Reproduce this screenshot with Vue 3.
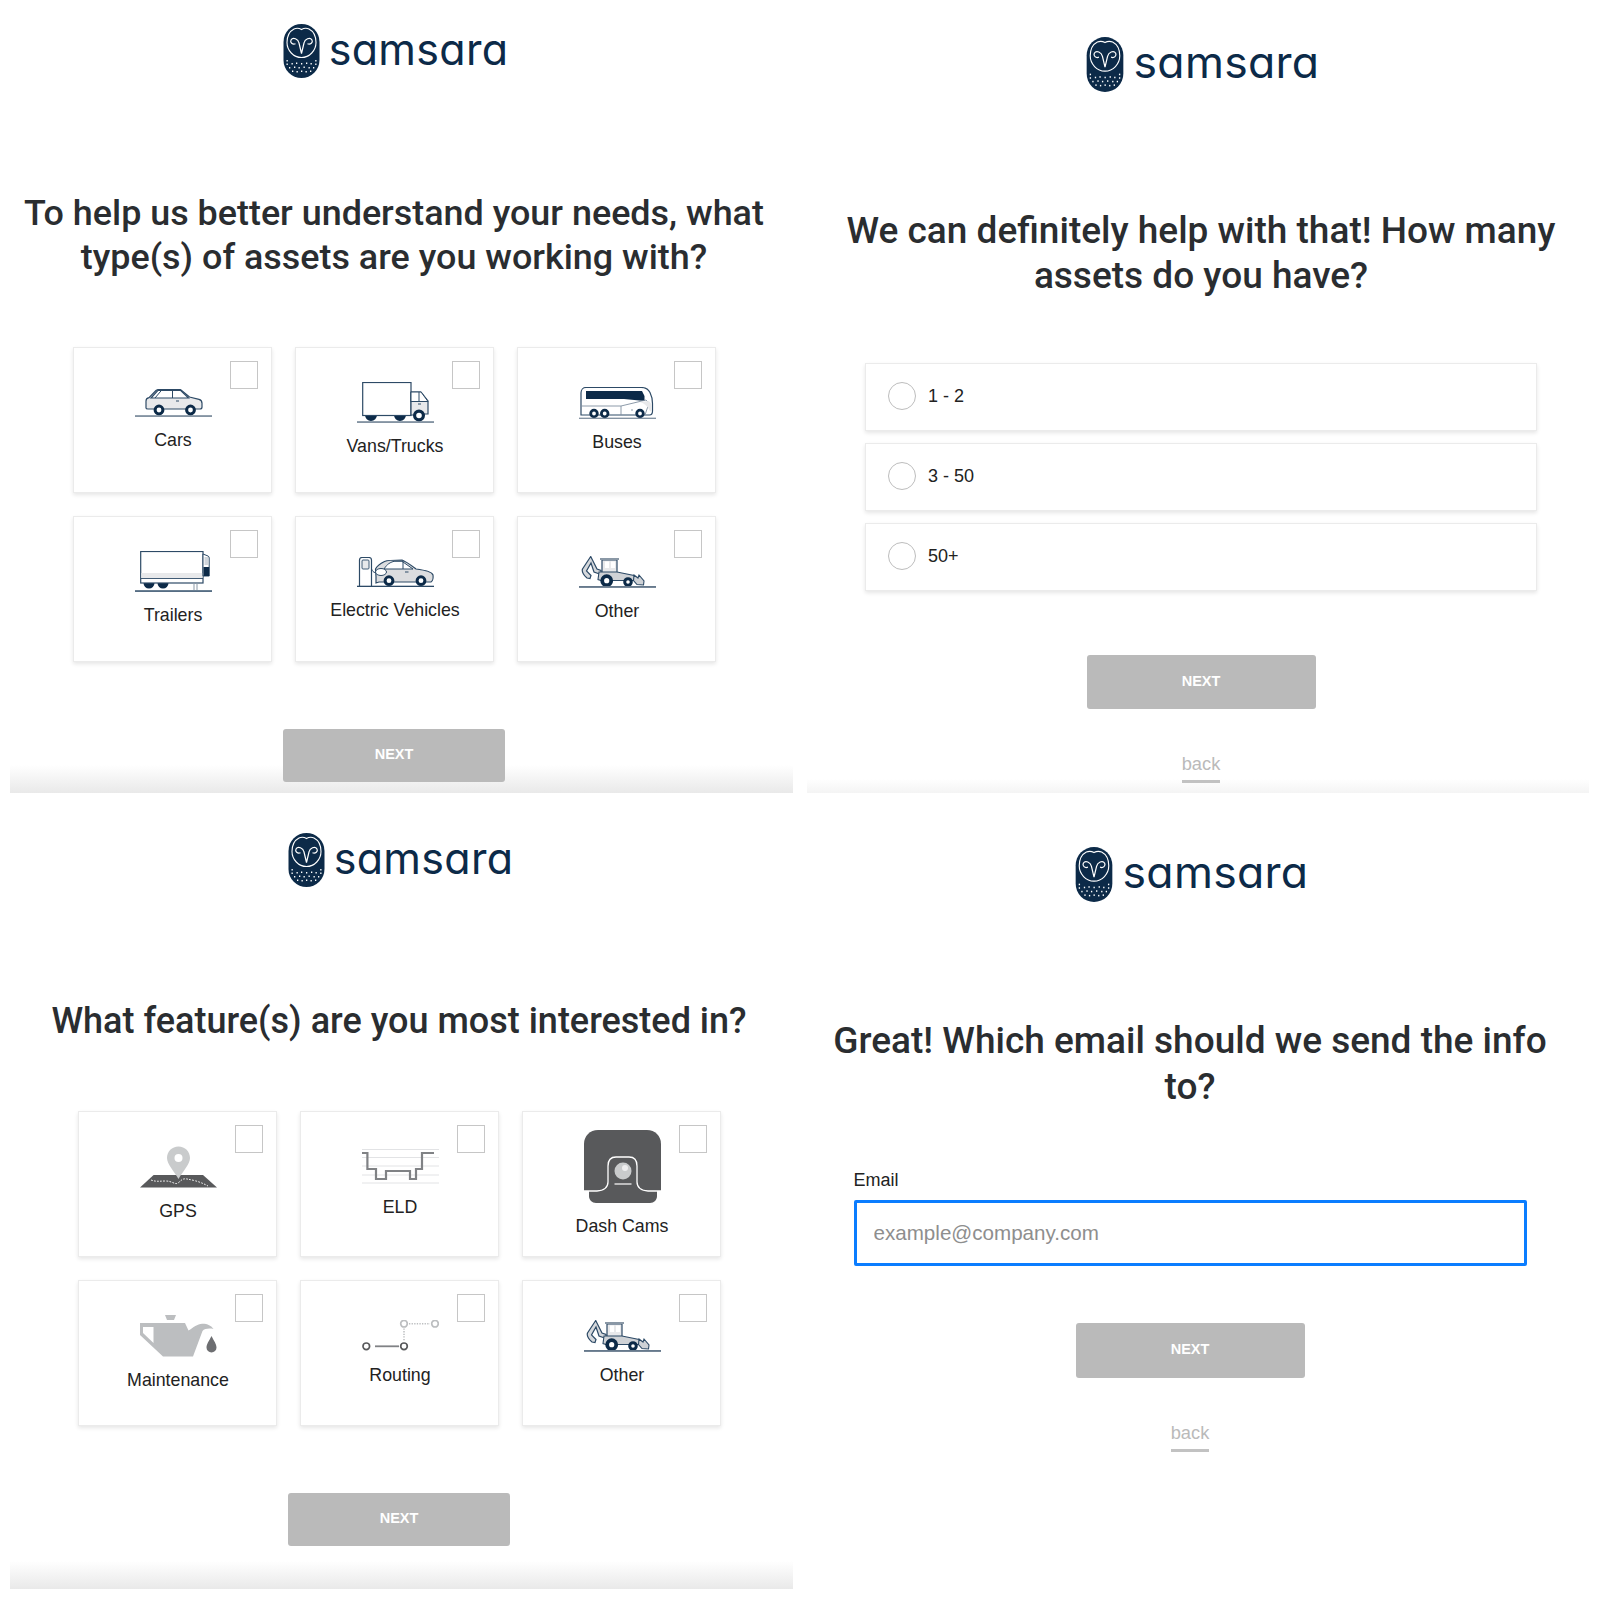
<template>
  <div class="page">
    <svg class="defs" width="0" height="0" aria-hidden="true">
      <symbol id="owl" viewBox="0 0 37 54">
        <rect x="0.5" y="0" width="36" height="54" rx="18" fill="#0c2a48" />
        <path d="M18.5 5.5c2-1.2 5-1.6 7.5-.6 4.500 2.300 7 7.300 7 13.600 0 8-6.500 15-14.500 15S4 26.500 4 18.500c0-6.300 2.500-11.300 7-13.600 2.500-1 5.500-.6 7.500.6z" fill="none" stroke="#fff" stroke-width="1.1" />
        <path d="M18.500 29.500 16 19c-.8-4-6-6.500-8-3-1.200 2.500 1.500 5 4.500 3.800M18.500 29.500 21 19c.8-4 6-6.500 8-3 1.200 2.500-1.500 5-4.500 3.800" fill="none" stroke="#fff" stroke-width="1.2" />
        <g fill="#fff">
          <rect x="3.500" y="36" width="1.300" height="1.500" /><rect x="32.200" y="36" width="1.300" height="1.500" />
          <rect x="3.500" y="39.500" width="1.300" height="1.500" /><rect x="8.500" y="39" width="1.300" height="1.500" /><rect x="13" y="38.500" width="1.300" height="1.500" /><rect x="18" y="39" width="1.300" height="1.500" /><rect x="23" y="38.500" width="1.300" height="1.500" /><rect x="27.500" y="39" width="1.300" height="1.500" /><rect x="32.200" y="39.500" width="1.300" height="1.500" />
          <rect x="6" y="43" width="1.300" height="1.500" /><rect x="11" y="42.500" width="1.300" height="1.500" /><rect x="15.500" y="43" width="1.300" height="1.500" /><rect x="20.500" y="42.500" width="1.300" height="1.500" /><rect x="25.500" y="43" width="1.300" height="1.500" /><rect x="30" y="43" width="1.300" height="1.500" />
          <rect x="9" y="46.500" width="1.300" height="1.500" /><rect x="13.500" y="47" width="1.300" height="1.500" /><rect x="18" y="46.500" width="1.300" height="1.500" /><rect x="22.500" y="47" width="1.300" height="1.500" /><rect x="27" y="46.500" width="1.300" height="1.500" />
        </g>
      </symbol>

      <symbol id="car" viewBox="0 0 77 28">
        <path d="M11 19v-7c0-2 1.500-3 3-3.300L21 1.500C22 .5 23 .4 25 .4h19c1 0 1.500.2 2.300.8L54.500 8l9.500 2.300c2 .5 3 2 3 4V18c0 1.300-.8 2-2 2H13c-1.300 0-2-.5-2-1z" fill="#e8e9eb" stroke="#2d4a66" stroke-width="1.200" />
        <path d="M16 9 23 1.300h22.500L53.500 9z" fill="#fff" stroke="#2d4a66" stroke-width="1.200" />
        <path d="M20 9 26.500 1.300M37.500 1v8M41 12h3" fill="none" stroke="#2d4a66" stroke-width="1" />
        <circle cx="24" cy="21" r="3.900" fill="#fff" stroke="#0c2a48" stroke-width="3" />
        <circle cx="55.500" cy="21" r="3.900" fill="#fff" stroke="#0c2a48" stroke-width="3" />
        <rect x="0" y="26.300" width="77" height="1.500" fill="#66798c" />
      </symbol>

      <symbol id="truck" viewBox="0 0 77 41">
        <path d="M8 33a6 6 0 0 0 12 0zM37 33a6 6 0 0 0 12 0z" fill="#0c2a48" />
        <rect x="5.700" y=".5" width="48.300" height="33" fill="#fff" stroke="#2d4a66" stroke-width="1.200" />
        <path d="M54 10h10l7 9v13h-4v1H54z" fill="#e8e9eb" stroke="#2d4a66" stroke-width="1.200" />
        <path d="M54 20V10h10l7 9.500H54zM62 10v10M61 22h3" fill="#fff" stroke="#2d4a66" stroke-width="1" />
        <circle cx="62" cy="33.500" r="4.400" fill="#fff" stroke="#0c2a48" stroke-width="3.200" />
        <rect x="0" y="39.300" width="77" height="1.500" fill="#66798c" />
      </symbol>

      <symbol id="bus" viewBox="0 0 77 32">
        <path d="M2 28V6c0-3 2-5.500 5-5.500h55c4 0 7 1 9 5 1.500 3 2.500 7 2.500 11V24c0 2-1 4-3 4z" fill="#fff" stroke="#2d4a66" stroke-width="1.200" />
        <path d="M7 4h56l2.500 5v5L45 12H7z" fill="#0c2a48" />
        <path d="M2 19h40l25-6 3 3-4 12M42 19v9M52 23h2" fill="none" stroke="#7f8f9f" stroke-width=".9" />
        <path d="M60 15c4 .5 8 3 11 9l2 1v-7l-3-4z" fill="#e8e9eb" />
        <circle cx="15" cy="26.500" r="3.300" fill="#fff" stroke="#0c2a48" stroke-width="2.800" />
        <circle cx="25.700" cy="26.500" r="3.300" fill="#fff" stroke="#0c2a48" stroke-width="2.800" />
        <circle cx="61" cy="26.500" r="3.300" fill="#fff" stroke="#0c2a48" stroke-width="2.800" />
        <rect x="0" y="30.700" width="77" height="1.100" fill="#66798c" />
      </symbol>

      <symbol id="trailer" viewBox="0 0 77 41">
        <path d="M8.500 32a5.500 5.500 0 0 0 11 0zM22.500 32a5.500 5.500 0 0 0 11 0z" fill="#0c2a48" />
        <rect x="5.700" y=".5" width="62.300" height="31.500" fill="#fff" stroke="#2d4a66" stroke-width="1.200" />
        <rect x="6.300" y="22" width="61.200" height="5" fill="#e8e9eb" />
        <path d="M6 27.500h62" stroke="#2d4a66" stroke-width=".9" />
        <path d="M68 3l5 2c.8.400 1.200 1 1.200 2v18H68z" fill="#fff" stroke="#2d4a66" stroke-width="1" />
        <rect x="68.500" y="16" width="5.700" height="9" fill="#0c2a48" />
        <path d="M69.500 7h3.500M69.500 9h3.500M69.500 11h3.500M69.500 13h3.500" stroke="#8a98a6" stroke-width=".8" />
        <path d="M59 32v7M62 32v7" stroke="#8a98a6" stroke-width="1" />
        <rect x="0" y="39.300" width="77" height="1.500" fill="#2d4a66" />
      </symbol>

      <symbol id="ev" viewBox="0 0 77 30">
        <path d="M2.500 29V3c0-1.500 1-2.500 2.500-2.500h7C13.500.5 14.500 1.500 14.500 3v26" fill="#fff" stroke="#2d4a66" stroke-width="1.200" />
        <rect x="5" y="3" width="7" height="9" rx="1" fill="#e8e9eb" stroke="#2d4a66" stroke-width=".9" />
        <path d="M19 26v-6.500l-.5-7.500c2-4 6-6 9-7.500C31 3 36 3 45 3c5 2 10 6 14 9 8 1 16 3 17 6 .3 2 0 6-2 7H22z" fill="#dcdddf" stroke="#2d4a66" stroke-width="1.200" />
        <path d="M27 12c2-3 4-6 10-7.700h8L56 12z" fill="#fff" stroke="#2d4a66" stroke-width="1" />
        <path d="M46 3.500V12M48 15h3.500" fill="none" stroke="#2d4a66" stroke-width="1" />
        <path d="M14.500 12c1 2 2 3.500 3.500 3.500" fill="none" stroke="#2d4a66" stroke-width="1" />
        <ellipse cx="24" cy="15" rx="5.500" ry="3.500" fill="#fff" stroke="#2d4a66" stroke-width="1" />
        <circle cx="32" cy="23.700" r="3.900" fill="#fff" stroke="#0c2a48" stroke-width="3" />
        <circle cx="64" cy="23.700" r="3.900" fill="#fff" stroke="#0c2a48" stroke-width="3" />
        <rect x="0" y="28.700" width="77" height="1.300" fill="#2d4a66" />
      </symbol>

      <symbol id="digger" viewBox="0 0 77 32">
        <path d="M11.700.5 3.500 13c-1 3 1 6 4.500 9l3 .5 1-3L7.500 15 12 7l3 9 7 2.500v-4L18 13z" fill="#d5d8dc" stroke="#2d4a66" stroke-width="1.200" />
        <path d="M23 4h15v13H23z" fill="#e8e9eb" stroke="#2d4a66" stroke-width="1.200" />
        <path d="M26 5.500h4V12h-4zM32 5.500h4V12h-4z" fill="#fff" />
        <path d="M21 3h19" stroke="#8a98a6" stroke-width="2" />
        <path d="M20 16h18l17 3.500 3 5H30l-5 1-6-2z" fill="#cfd2d6" stroke="#2d4a66" stroke-width="1.100" />
        <path d="M55 19l4 3 1-3 5 6-.5 4-6.500-.5-3.500-4z" fill="#cfd2d6" stroke="#2d4a66" stroke-width="1.100" />
        <circle cx="27.700" cy="24.700" r="4.500" fill="#fff" stroke="#0c2a48" stroke-width="3.800" />
        <circle cx="49" cy="26" r="3.300" fill="#fff" stroke="#0c2a48" stroke-width="3" />
        <rect x="0" y="30" width="77" height="1.900" fill="#66798c" />
      </symbol>

      <symbol id="gps" viewBox="0 0 77 42">
        <path d="M13.600 29H63L77 41.500H0z" fill="#58595b" />
        <path d="M38.500.500c6.500 0 11.500 5 11.500 11.500 0 6-7 13-11.500 21C34 25 27 18 27 12 27 5.500 32 .5 38.500.500z" fill="#c9cbcc" />
        <circle cx="38.500" cy="12" r="4" fill="#fff" />
        <path d="M11 34c5 2 9 1 15 1s9 4 12 2 4-5 9-4 12 2 21 7" fill="none" stroke="#fff" stroke-width=".9" stroke-dasharray="1.800 1.300" />
      </symbol>

      <symbol id="eld" viewBox="0 0 77 35">
        <path d="M0 .5h77M0 8.500h77M0 17h77M0 26h77M0 34h77" stroke="#e2e3e5" stroke-width="1" />
        <path d="M0 4h5.400v16H14v10h10v-8h24v8h6V20h6V4h12" fill="none" stroke="#808285" stroke-width="2.200" />
      </symbol>

      <symbol id="dash" viewBox="0 0 77 73">
        <path d="M5 60v6c0 4 3 7 7 7h54c4 0 7-3 7-7v-6z" fill="#58595b" />
        <path d="M0 14C0 6 6 0 14 0h49c8 0 14 6 14 14v47H0z" fill="#58595b" />
        <path d="M0 61h13c7 0 11-4 11-9V36c0-6 3-9 8-9h13c5 0 8 3 8 9v16c0 5 4 9 11 9h13" fill="none" stroke="#fff" stroke-width="1.300" />
        <circle cx="39" cy="41" r="8.500" fill="#c9cbcc" />
        <circle cx="41" cy="38" r="3" fill="#eeeeef" />
        <path d="M30.500 54h17" stroke="#fff" stroke-width="1.200" />
      </symbol>

      <symbol id="oil" viewBox="0 0 77 42">
        <path d="M25 0h11l-2 5h-7z" fill="#bcbec0" />
        <path d="M0 8h45l3.500 7.500c5-3 9-7 14-6.800 5 0 9 2 11 5.300-4-1-9-.5-11 2L53 41.500H23L0 20zm3 4v6l10.500 10V12z" fill="#bcbec0" fill-rule="evenodd" />
        <path d="M71.500 21c2.500 5 5 8 5 11.500a5 5 0 0 1-10 0c0-3.500 2.500-6.500 5-11.500z" fill="#6d6e71" />
      </symbol>

      <symbol id="route" viewBox="0 0 77 32">
        <circle cx="4.300" cy="26.300" r="3.300" fill="none" stroke="#58595b" stroke-width="1.700" />
        <circle cx="42" cy="26.300" r="3.300" fill="none" stroke="#58595b" stroke-width="1.700" />
        <circle cx="42" cy="3.700" r="3.300" fill="none" stroke="#bcbec0" stroke-width="1.700" />
        <circle cx="73" cy="3.700" r="3.300" fill="none" stroke="#bcbec0" stroke-width="1.700" />
        <path d="M13 26.300h24" stroke="#808285" stroke-width="1.800" />
        <path d="M42 8.500v13M47 3.700h21" stroke="#bcbec0" stroke-width="1.500" stroke-dasharray="1.300 1.300" />
      </symbol>
    </svg>

    <section class="panel p1">
      <div class="logo"><svg class="owl"><use href="#owl" /></svg><span>samsara</span></div>
      <h1>To help us better understand your needs, what<br />type(s) of assets are you working with?</h1>
      <div class="cards">
        <div v-for="a in assets" :key="a.label" class="card">
          <span class="check"></span>
          <svg class="pic" :style="{ height: a.h + 'px' }"><use :href="'#' + a.icon" /></svg>
          <span class="label">{{ a.label }}</span>
        </div>
      </div>
      <button class="next">NEXT</button>
    </section>

    <section class="panel p2">
      <div class="logo big"><svg class="owl"><use href="#owl" /></svg><span>samsara</span></div>
      <h1>We can definitely help with that! How many<br />assets do you have?</h1>
      <div class="options">
        <label v-for="o in counts" :key="o" class="option"><span class="radio"></span>{{ o }}</label>
      </div>
      <button class="next wide">NEXT</button>
      <a class="back">back</a>
    </section>

    <section class="panel p3">
      <div class="logo"><svg class="owl"><use href="#owl" /></svg><span>samsara</span></div>
      <h1>What feature(s) are you most interested in?</h1>
      <div class="cards">
        <div v-for="f in features" :key="f.label" class="card">
          <span class="check"></span>
          <svg class="pic" :style="{ height: f.h + 'px' }"><use :href="'#' + f.icon" /></svg>
          <span class="label">{{ f.label }}</span>
        </div>
      </div>
      <button class="next">NEXT</button>
    </section>

    <section class="panel p4">
      <div class="logo big"><svg class="owl"><use href="#owl" /></svg><span>samsara</span></div>
      <h1>Great! Which email should we send the info<br />to?</h1>
      <div class="field">
        <label class="email-label">Email</label>
        <input class="email" type="text" placeholder="example@company.com" />
      </div>
      <button class="next wide">NEXT</button>
      <a class="back">back</a>
    </section>
  </div>
</template>

<script setup>
const assets = [
  { label: 'Cars', icon: 'car', h: 28 },
  { label: 'Vans/Trucks', icon: 'truck', h: 41 },
  { label: 'Buses', icon: 'bus', h: 32 },
  { label: 'Trailers', icon: 'trailer', h: 41 },
  { label: 'Electric Vehicles', icon: 'ev', h: 30 },
  { label: 'Other', icon: 'digger', h: 32 }
]

const features = [
  { label: 'GPS', icon: 'gps', h: 42 },
  { label: 'ELD', icon: 'eld', h: 35 },
  { label: 'Dash Cams', icon: 'dash', h: 73 },
  { label: 'Maintenance', icon: 'oil', h: 42 },
  { label: 'Routing', icon: 'route', h: 32 },
  { label: 'Other', icon: 'digger', h: 32 }
]

const counts = ['1 - 2', '3 - 50', '50+']
</script>

<style>
body { background: #fff; }
</style>

<style scoped>
.page { width: 1600px; height: 1600px; display: grid; grid-template-columns: 800px 800px; grid-template-rows: 793px 807px; overflow: hidden; font-family: "Liberation Sans", Arial, sans-serif; }
.defs { position: absolute; }
.panel { position: relative; box-sizing: border-box; display: flex; flex-direction: column; align-items: center; }
.panel::after { content: ''; position: absolute; left: 10px; width: 783px; bottom: 0; pointer-events: none; }

.p1 { padding: 24px 12px 0 0; }
.p1::after { height: 28px; background: linear-gradient(rgba(232, 232, 232, 0), #e9e9e9); }
.p2 { padding: 37px 0 0 2px; }
.p2::after { left: 7px; width: 782px; height: 14px; background: linear-gradient(rgba(240, 240, 240, 0), #f4f4f4); }
.p3 { padding: 40px 2px 0 0; }
.p3::after { bottom: 11px; height: 28px; background: linear-gradient(rgba(232, 232, 232, 0), #e9e9e9); }
.p4 { padding: 54px 20px 0 0; }

.logo { display: flex; align-items: center; gap: 9px; height: 54px; margin-left: 3px; color: #0c2a48; font-family: Inter, "Liberation Sans", sans-serif; font-size: 43px; font-feature-settings: "cv11"; letter-spacing: 0.3px; }
.logo span { padding-bottom: 4px; }
.logo.big { height: 55px; gap: 10px; font-size: 44.500px; }
.logo.big span { padding-bottom: 6px; }
.owl { width: 37px; height: 54px; }
.big .owl { width: 38px; height: 55px; }

h1 { margin: 113px 0 0; font-family: Roboto, "Liberation Sans", sans-serif; font-size: 35.9px; font-weight: 500; line-height: 44px; color: #2a2d30; text-align: center; white-space: nowrap; }
.p2 h1 { margin-top: 116px; font-size: 37px; line-height: 45px; }
.p3 h1 { margin-top: 112px; font-size: 36px; line-height: 45px; }
.p4 h1 { margin-top: 116px; font-size: 37px; line-height: 46px; }

.cards { display: grid; grid-template-columns: repeat(3, 199px); grid-auto-rows: 146px; gap: 23px; margin-top: 68px; }
.p3 .cards { margin-top: 67px; }
.card { position: relative; box-sizing: border-box; display: flex; flex-direction: column; align-items: center; justify-content: center; padding: 0 0 2px 2px; background: #fff; border: 1px solid #ebebeb; box-shadow: 0 2px 4px rgba(0, 0, 0, 0.1); }
.check { position: absolute; top: 13px; right: 13px; box-sizing: border-box; width: 28px; height: 28px; border: 1px solid #c6c6c6; }
.pic { width: 77px; flex: none; }
.label { margin-top: 13px; font-size: 17.8px; line-height: 20px; color: #222; white-space: nowrap; }

.next { position: relative; z-index: 1; display: block; width: 222px; height: 53px; margin-top: 67px; padding: 0 0 3px; background: #bababa; border: 0; border-radius: 3px; color: #fff; font-family: "Liberation Sans", sans-serif; font-size: 14.500px; font-weight: 700; }
.next.wide { width: 229px; height: 54px; margin-top: 64px; }
.p4 .next.wide { height: 55px; margin-top: 57px; }

.options { display: flex; flex-direction: column; gap: 12px; width: 672px; margin-top: 65px; }
.option { box-sizing: border-box; display: flex; align-items: center; gap: 12px; height: 68px; padding: 0 0 2px 22px; border: 1px solid #ebebeb; box-shadow: 0 2px 4px rgba(0, 0, 0, 0.1); font-size: 18px; color: #222; }
.radio { box-sizing: border-box; width: 28px; height: 28px; border: 1px solid #bdbdbd; border-radius: 50%; }

.back { position: relative; z-index: 1; margin-top: 44px; padding-bottom: 6px; border-bottom: 3px solid #c2c2c2; color: #bababa; font-size: 18.300px; line-height: 21px; }

.field { width: 673px; margin-top: 60px; }
.email-label { display: block; font-size: 18px; line-height: 20px; color: #222; }
.email { display: block; box-sizing: border-box; width: 100%; height: 66px; margin-top: 10px; padding: 0 17px; border: 3px solid #0b7dff; border-radius: 2px; outline: 0; font-family: "Liberation Sans", sans-serif; font-size: 20.600px; }
.email::placeholder { color: #8e8e8e; opacity: 1; }
</style>
